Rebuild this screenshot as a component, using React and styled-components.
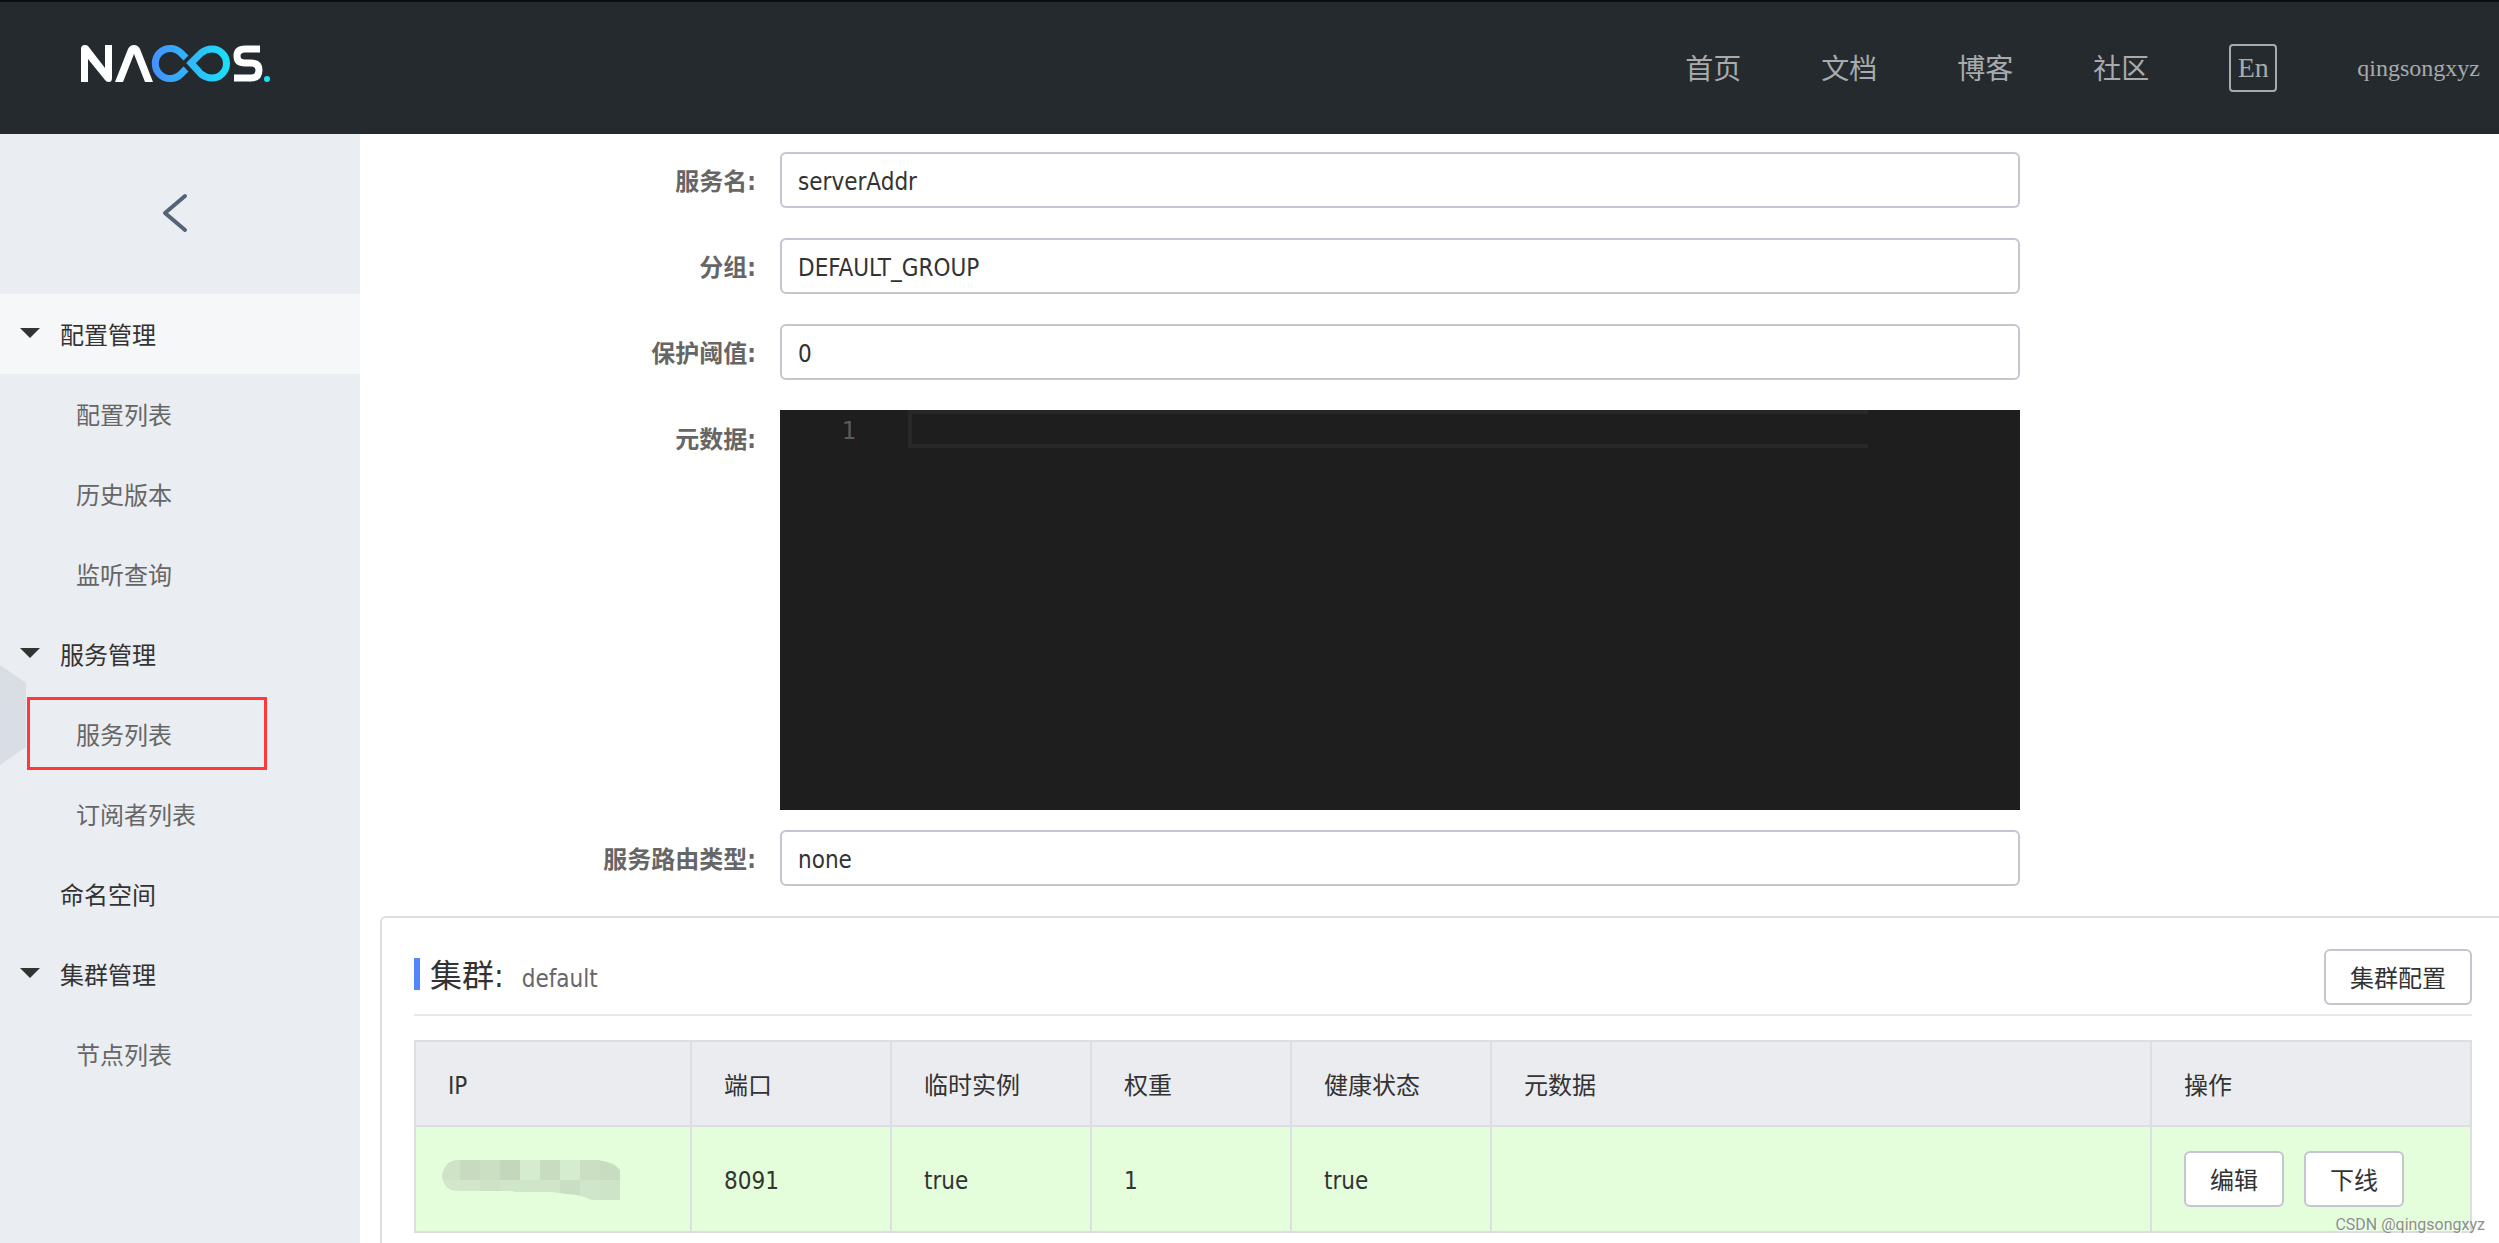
import React from "react";
import styled, { createGlobalStyle } from "styled-components";

const GlobalStyle = createGlobalStyle`
  * {
    box-sizing: border-box;
  }
  body {
    margin: 0;
    background: #fff;
    color: #333;
    font-family: "DejaVu Sans Condensed", "Noto Sans CJK SC", sans-serif;
    font-size: 24px;
    line-height: 36px;
  }
  button,
  input,
  textarea {
    font: inherit;
    color: inherit;
  }
`;

const navLinks = ["首页", "文档", "博客", "社区"];

const menu = [
  { name: "配置管理", open: true, active: true, children: ["配置列表", "历史版本", "监听查询"] },
  { name: "服务管理", open: true, children: ["服务列表", "订阅者列表"] },
  { name: "命名空间", children: [] },
  { name: "集群管理", open: true, children: ["节点列表"] },
];

const columns = ["IP", "端口", "临时实例", "权重", "健康状态", "元数据", "操作"];

// mosaic tiles over the address, left to right
const topTiles = ["#cfe4c7", "#c8dbc0", "#cbdfc3", "#c4d7bc", "#d5ecce", "#c8dcbf", "#d5ecce", "#cbe0c3", "#c8dcc0"];
const bottomTiles = ["#d2e8ca", "#d2e7c9", "#cee2c5", "#d0e6c9", "#d0e6c8", "#d1e5c8", "#cadec3", "#cfe6ca", "#cee4c9"];

const Logo = () => (
  <svg width="192" height="40" viewBox="80 44 192 40" role="img" aria-label="NACOS">
    <defs>
      <linearGradient id="loop" gradientUnits="userSpaceOnUse" x1="152" y1="0" x2="231" y2="0">
        <stop offset="0" stopColor="#4490ff" />
        <stop offset="1" stopColor="#19e3f7" />
      </linearGradient>
    </defs>
    <g fill="#fff">
      <path d="M81 82V49Q81 45 85 45Q87 45 88 46L105 68V45H112V78Q112 82 109 82Q106 82 105 80L88 59V82Z" />
      <path d="M115 82L128 49Q130 45 134 45Q138 45 140 49L153 82H145L134 54L123 82Z" />
    </g>
    <path
      d="M260 49H245Q237 49 237 56Q237 63 245 63H251Q259 63 259 70Q259 78 251 78H234"
      fill="none"
      stroke="#fff"
      strokeWidth="7"
    />
    <g fill="none" stroke="url(#loop)" strokeWidth="7">
      <path d="M186 58L181 53A15 15 0 1 0 181 74L186 69" />
      <path d="M191 63L201 53Q206 49 212 49A14 14 0 0 1 212 78Q206 78 201 74Z" />
    </g>
    <circle cx="267" cy="79" r="3" fill="#19e3f7" />
  </svg>
);

const MaskedIp = () => (
  <svg width="178" height="40" viewBox="0 0 178 40" aria-hidden="true">
    <clipPath id="smear">
      <path d="M0 16Q2 2 14 0H156Q172 2 178 10V40H150Q138 34 124 34L110 32H74L70 31H14Q2 30 0 16Z" />
    </clipPath>
    <g clipPath="url(#smear)" shapeRendering="crispEdges">
      {topTiles.map((fill, i) => (
        <rect key={i} x={i * 20 - 2} y="0" width="20" height="20" fill={fill} />
      ))}
      {bottomTiles.map((fill, i) => (
        <rect key={i} x={i * 20 - 2} y="20" width="20" height="20" fill={fill} />
      ))}
    </g>
  </svg>
);

const Field = ({ id, label, value }) => (
  <FormRow>
    <Label htmlFor={id}>{label}:</Label>
    <TextInput id={id} defaultValue={value} />
  </FormRow>
);

const App = () => {
  return (
    <Page>
      <GlobalStyle />
      <Header>
        <LogoLink href="#">
          <Logo />
        </LogoLink>
        <Nav>
          {navLinks.map((name) => (
            <NavLink href="#" key={name}>
              {name}
            </NavLink>
          ))}
          <LangButton type="button">En</LangButton>
          <UserLink href="#">qingsongxyz</UserLink>
        </Nav>
      </Header>
      <Body>
        <Sidebar>
          <BackButton type="button" aria-label="返回">
            <svg width="28" height="40" viewBox="0 0 28 40">
              <path
                d="M24 3L4 20L24 37"
                fill="none"
                stroke="#546478"
                strokeWidth="4"
                strokeLinecap="round"
                strokeLinejoin="round"
              />
            </svg>
          </BackButton>
          <Handle viewBox="0 0 26 100">
            <path d="M0 0L26 18V82L0 100Z" fill="#d9dde4" />
          </Handle>
          {menu.map((group) => (
            <React.Fragment key={group.name}>
              <MenuGroup href="#" $active={group.active}>
                {group.open && <Caret />}
                {group.name}
              </MenuGroup>
              {group.children.map((child) => (
                <MenuItem href="#" key={child}>
                  {child}
                  {child === "服务列表" && <Marker />}
                </MenuItem>
              ))}
            </React.Fragment>
          ))}
        </Sidebar>
        <Main>
          <Content>
            <Field id="name" label="服务名" value="serverAddr" />
            <Field id="group" label="分组" value="DEFAULT_GROUP" />
            <Field id="threshold" label="保护阈值" value="0" />
            <FormRow $tight>
              <Label htmlFor="metadata">元数据:</Label>
              <Editor>
                <LineNumber>1</LineNumber>
                <CodeLine id="metadata" rows={1} />
              </Editor>
            </FormRow>
            <Field id="selector" label="服务路由类型" value="none" />

            <Panel>
              <PanelHead>
                <PanelTitle>集群:</PanelTitle>
                <ClusterName>default</ClusterName>
                <Button type="button">集群配置</Button>
              </PanelHead>
              <Table>
                <colgroup>
                  <Col $width={276} />
                  <Col $width={200} />
                  <Col $width={200} />
                  <Col $width={200} />
                  <Col $width={200} />
                  <Col />
                  <Col $width={320} />
                </colgroup>
                <thead>
                  <tr>
                    {columns.map((name) => (
                      <Th key={name}>{name}</Th>
                    ))}
                  </tr>
                </thead>
                <tbody>
                  <tr>
                    <MaskedTd>
                      <MaskedIp />
                    </MaskedTd>
                    <Td>8091</Td>
                    <Td>true</Td>
                    <Td>1</Td>
                    <Td>true</Td>
                    <Td />
                    <ActionsTd>
                      <Actions>
                        <Button type="button">编辑</Button>
                        <Button type="button">下线</Button>
                      </Actions>
                    </ActionsTd>
                  </tr>
                </tbody>
              </Table>
            </Panel>
          </Content>
        </Main>
      </Body>
      <Watermark>CSDN @qingsongxyz</Watermark>
    </Page>
  );
};

export default App;

const Page = styled.div`
  position: relative;
  display: flex;
  flex-direction: column;
  height: 100vh;
  overflow: hidden;
`;

const Header = styled.header`
  display: flex;
  flex: none;
  align-items: center;
  justify-content: space-between;
  height: 134px;
  padding: 0 19px 0 80px;
  border-top: 2px solid #0b0d0f;
  background: #252a2f;
`;

const LogoLink = styled.a`
  display: flex;
  margin-bottom: 8px;
`;

const Nav = styled.nav`
  display: flex;
  align-items: center;
  gap: 80px;
`;

const NavLink = styled.a`
  padding-top: 4px;
  color: #a8aaac;
  font-size: 28px;
  text-decoration: none;
`;

const LangButton = styled.button`
  width: 48px;
  height: 48px;
  padding: 0;
  border: 2px solid #a8aaac;
  border-radius: 4px;
  background: none;
  && {
    color: #a8aaac;
    font-family: "Liberation Serif", serif;
    font-size: 28px;
  }
`;

const UserLink = styled.a`
  color: #a8aaac;
  font-family: "Liberation Serif", serif;
  text-decoration: none;
`;

const Body = styled.div`
  display: flex;
  flex: 1;
  min-height: 0;
`;

const Sidebar = styled.aside`
  position: relative;
  flex: none;
  width: 360px;
  background: #eaedf1;
`;

const BackButton = styled.button`
  display: flex;
  align-items: center;
  justify-content: center;
  width: 100%;
  height: 160px;
  padding: 0 10px 2px 0;
  border: 0;
  background: none;
`;

const Handle = styled.svg`
  position: absolute;
  top: 531px;
  left: 0;
  width: 26px;
  height: 100px;
`;

const MenuGroup = styled.a`
  display: flex;
  position: relative;
  align-items: center;
  height: 80px;
  padding: 4px 0 0 60px;
  background: ${(props) => (props.$active ? "#f6f7f9" : "transparent")};
  color: #333;
  text-decoration: none;
`;

const Caret = styled.span`
  position: absolute;
  top: 34px;
  left: 20px;
  border: 10px solid transparent;
  border-top-color: #333;
  border-bottom: 0;
`;

const MenuItem = styled.a`
  display: flex;
  position: relative;
  align-items: center;
  height: 80px;
  padding: 4px 0 0 76px;
  color: #666;
  text-decoration: none;
`;

const Marker = styled.span`
  position: absolute;
  top: 3px;
  left: 27px;
  width: 240px;
  height: 73px;
  border: 3px solid #ff3838;
`;

const Main = styled.main`
  flex: 1;
  min-width: 0;
  overflow: hidden;
`;

const Content = styled.div`
  margin: 18px -7px 0 20px;
`;

const FormRow = styled.div`
  display: flex;
  margin-bottom: ${(props) => (props.$tight ? "20px" : "30px")};
`;

const Label = styled.label`
  flex: none;
  width: 400px;
  padding: 12px 24px 8px 0;
  color: #666;
  font-weight: bold;
  text-align: right;
`;

const TextInput = styled.input`
  width: calc(100% * 14 / 24);
  height: 56px;
  padding: 4px 16px 0;
  border: 2px solid #c4c6cf;
  border-radius: 6px;
  background: #fff;
`;

const Editor = styled.div`
  display: flex;
  align-items: flex-start;
  width: calc(100% * 14 / 24);
  height: 400px;
  padding-right: 152px;
  background: #1e1e1e;
  font-family: "DejaVu Sans Mono", monospace;
`;

const LineNumber = styled.span`
  width: 128px;
  padding-right: 52px;
  color: #5a5a5a;
  line-height: 42px;
  text-align: right;
`;

const CodeLine = styled.textarea`
  flex: 1;
  height: 38px;
  padding: 0;
  border: 4px solid #282828;
  border-right: 0;
  outline: 0;
  background: none;
  line-height: 30px;
  overflow: hidden;
  resize: none;
  && {
    color: #d4d4d4;
  }
`;

const Panel = styled.section`
  padding: 0 32px 32px;
  border: 2px solid #dcdee3;
  border-radius: 6px;
`;

const PanelHead = styled.div`
  display: flex;
  align-items: center;
  margin-bottom: 24px;
  padding: 31px 0 9px;
  border-bottom: 2px solid #e6e7eb;

  button {
    margin-left: auto;
  }
`;

const PanelTitle = styled.h2`
  height: 32px;
  margin: 0 18px 6px 0;
  padding-left: 10px;
  border-left: 6px solid #5584ff;
  font-size: 32px;
  font-weight: normal;
  line-height: 36px;
`;

const ClusterName = styled.span`
  padding-top: 4px;
  color: #666;
`;

const Button = styled.button`
  height: 56px;
  padding: 4px 24px 0;
  border: 2px solid #c4c6cf;
  border-radius: 6px;
  background: #fff;
`;

const Table = styled.table`
  width: 100%;
  border: 0 solid #dcdee3;
  border-width: 2px 0 0 2px;
  border-spacing: 0;
  table-layout: fixed;
`;

const Col = styled.col`
  width: ${(props) => (props.$width ? `${props.$width}px` : "auto")};
`;

const Th = styled.th`
  height: 85px;
  padding: 4px 32px 0;
  border: 0 solid #dcdee3;
  border-width: 0 2px 2px 0;
  background: #ebecf0;
  font-weight: normal;
  text-align: left;
`;

const Td = styled.td`
  height: 106px;
  padding: 4px 32px 0;
  border: 0 solid #dcdee3;
  border-width: 0 2px 2px 0;
  background: #e4fdda;
`;

const MaskedTd = styled(Td)`
  padding: 2px 26px 0;

  svg {
    display: block;
  }
`;

const ActionsTd = styled(Td)`
  padding: 0 32px;
`;

const Actions = styled.div`
  display: flex;
  gap: 20px;
`;

const Watermark = styled.div`
  position: absolute;
  right: 14px;
  bottom: 6px;
  color: #8a8f8a;
  font-family: Roboto, sans-serif;
  font-size: 16px;
  line-height: 24px;
  text-shadow: 1px 1px 0 #fff;
`;
